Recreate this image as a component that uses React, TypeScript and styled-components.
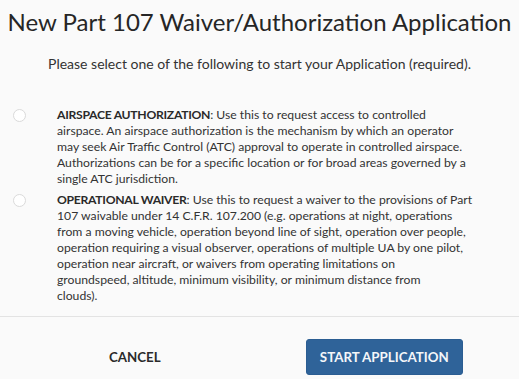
import React, { useState } from 'react';
import styled, { createGlobalStyle } from 'styled-components';

const GlobalStyle = createGlobalStyle`
    html, body {
        margin: 0;
        padding: 0;
        background: #fafafa;
    }
    body {
        font-family: Lato, "Liberation Sans", sans-serif;
        color: #333;
    }
`

const Modal = styled.div`
    width: 519px;
    height: 379px;
    display: flex;
    flex-direction: column;
    background: #fafafa;
    overflow: hidden;
`

const Title = styled.h1`
    margin: 6px 0 0;
    font-size: 24px;
    font-weight: 400;
    line-height: 32px;
    color: #262626;
    text-align: center;
    white-space: nowrap;
`

const Subtitle = styled.p`
    margin: 16px 0 0;
    font-size: 14px;
    line-height: 20px;
    color: #333;
    text-align: center;
`

const OptionList = styled.div`
    display: flex;
    flex-direction: column;
    gap: 5px;
    padding: 33px 0 0 13px;
`

const Option = styled.label`
    display: grid;
    grid-template-columns: 12px 440px;
    column-gap: 32px;
    align-items: start;
    cursor: pointer;
`

const Radio = styled.span<{ $checked: boolean }>`
    width: 11px;
    height: 11px;
    margin-top: 2px;
    border-radius: 50%;
    border: 1px solid #dadada;
    background: ${props => props.$checked ? '#2e6399' : '#fff'};
`

// line breaks follow the original layout
const OptionText = styled.p`
    margin: 0;
    font-size: 12.2px;
    line-height: 16px;
    color: #333;
    white-space: nowrap;

    strong {
        letter-spacing: -0.3px;
        color: #2a2a2a;
    }
`

const Footer = styled.div`
    margin-top: auto;
    border-top: 1px solid #e3e3e3;
    display: grid;
    grid-template-columns: 1fr 1fr;
    align-items: start;
    justify-items: center;
    height: 63px;
    padding: 22px 10px 0;
    box-sizing: border-box;
`

const Button = styled.button<{ $primary?: boolean }>`
    font-family: inherit;
    font-size: 13.3px;
    font-weight: 700;
    text-transform: uppercase;
    border-radius: 3px;
    cursor: pointer;
    height: 36px;
    padding: 0 13px;
    border: ${props => props.$primary ? '1px solid #2b5d92' : 'none'};
    background: ${props => props.$primary ? '#2f6399' : 'transparent'};
    color: ${props => props.$primary ? '#f4f6f9' : '#2a2a2a'};
`

const options = [
    {
        id: 'airspace',
        title: 'AIRSPACE AUTHORIZATION',
        lines: [
            ': Use this to request access to controlled',
            'airspace. An airspace authorization is the mechanism by which an operator',
            'may seek Air Traffic Control (ATC) approval to operate in controlled airspace.',
            'Authorizations can be for a specific location or for broad areas governed by a',
            'single ATC jurisdiction.',
        ],
    },
    {
        id: 'waiver',
        title: 'OPERATIONAL WAIVER',
        lines: [
            ': Use this to request a waiver to the provisions of Part',
            '107 waivable under 14 C.F.R. 107.200 (e.g. operations at night, operations',
            'from a moving vehicle, operation beyond line of sight, operation over people,',
            'operation requiring a visual observer, operations of multiple UA by one pilot,',
            'operation near aircraft, or waivers from operating limitations on',
            'groundspeed, altitude, minimum visibility, or minimum distance from',
            'clouds).',
        ],
    },
]

const App = () => {
    const [selected, setSelected] = useState<string | null>(null)
    return (
        <Modal>
            <GlobalStyle />
            <Title>New Part 107 Waiver/Authorization Application</Title>
            <Subtitle>Please select one of the following to start your Application (required).</Subtitle>
            <OptionList>
                {options.map(opt => (
                    <Option key={opt.id} onClick={() => setSelected(opt.id)}>
                        <Radio $checked={selected === opt.id} />
                        <OptionText>
                            <strong>{opt.title}</strong>
                            {opt.lines.map((line, i) => (
                                <React.Fragment key={i}>
                                    {i > 0 && <br />}
                                    {line}
                                </React.Fragment>
                            ))}
                        </OptionText>
                    </Option>
                ))}
            </OptionList>
            <Footer>
                <Button>Cancel</Button>
                <Button $primary>Start Application</Button>
            </Footer>
        </Modal>
    );
};

export default App;
